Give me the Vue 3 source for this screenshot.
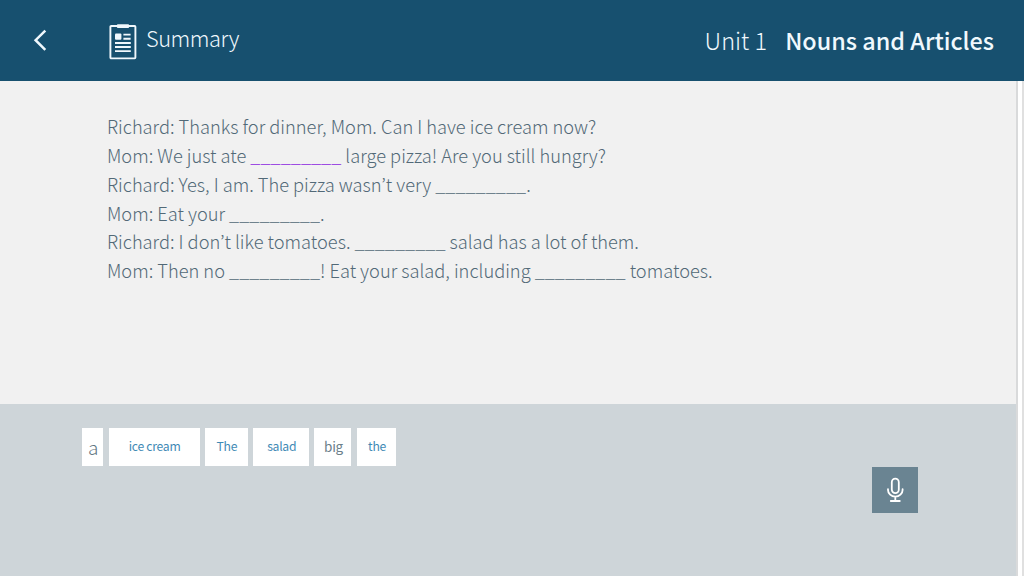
<template>
  <div class="lesson">
    <header class="top-bar">
      <button class="back-button" aria-label="Back">
        <svg width="14" height="24" viewBox="0 0 14 24">
          <path d="M12.3 1.7 2.6 11.2l9.7 9.6" fill="none" stroke="currentColor" stroke-width="2.5" />
        </svg>
      </button>
      <svg class="summary-icon" width="28" height="36" viewBox="0 0 28 36">
        <rect x="1.4" y="2" width="25" height="32.4" rx="0.8" fill="none" stroke="currentColor" stroke-width="1.9" />
        <rect x="7.8" y="0.3" width="12.4" height="3.6" rx="1.2" fill="currentColor" />
        <rect x="6" y="9.4" width="6.4" height="6.4" rx="1" fill="currentColor" />
        <path d="M14.4 10.6h7.2M14.4 14.8h7.2M6 19h15.8M6 23h15.8M6 27.1h15.8" stroke="currentColor" stroke-width="1.9" />
      </svg>
      <span class="section-name">Summary</span>
      <div class="unit-info">
        <span class="unit-number">Unit 1</span>
        <span class="unit-title">Nouns and Articles</span>
      </div>
    </header>

    <div class="page-body">
      <div class="panels">
        <main class="dialogue">
          <p v-for="(line, index) in lines" :key="index" class="dialogue-line">
            <template v-for="(part, i) in line" :key="i">
              <span v-if="part === null" class="blank" :class="{ active: index === 1 }">_________</span>
              <span v-else>{{ part }}</span>
            </template>
          </p>
        </main>

        <section class="word-bank">
          <div class="words">
            <button v-for="word in words" :key="word.text" class="word" :class="word.style">{{ word.text }}</button>
          </div>
          <button class="mic-button" aria-label="Record">
            <svg width="18" height="26" viewBox="0 0 18 26">
              <g fill="none" stroke="currentColor" stroke-width="1.8" stroke-linecap="round">
                <rect x="5.8" y="1.7" width="7" height="14.4" rx="3.5" />
                <path d="M2 12.2v.8a7.3 6.6 0 0 0 14.6 0v-.8M9.3 19.8v4M4.8 24h9" />
              </g>
            </svg>
          </button>
        </section>
      </div>
      <div class="scroll-track"></div>
    </div>
  </div>
</template>

<script setup>
// null marks a gap that the learner fills in
const lines = [
  ['Richard: Thanks for dinner, Mom. Can I have ice cream now?'],
  ['Mom: We just ate ', null, ' large pizza! Are you still hungry?'],
  ['Richard: Yes, I am. The pizza wasn’t very ', null, '.'],
  ['Mom: Eat your ', null, '.'],
  ['Richard: I don’t like tomatoes. ', null, ' salad has a lot of them.'],
  ['Mom: Then no ', null, '! Eat your salad, including ', null, ' tomatoes.']
]

const words = [
  { text: 'a', style: 'word-a' },
  { text: 'ice cream', style: 'word-ice' },
  { text: 'The', style: 'word-article-upper' },
  { text: 'salad', style: 'word-salad' },
  { text: 'big', style: 'word-big' },
  { text: 'the', style: 'word-article' }
]
</script>

<style>
body {
  margin: 0;
}
</style>

<style scoped>
.lesson {
  width: 1024px;
  height: 576px;
  display: flex;
  flex-direction: column;
  overflow: hidden;
  background: #fff;
  font-family: "Noto Sans CJK JP", "Open Sans", sans-serif;
  font-weight: 300;
}

button {
  font: inherit;
  border: 0;
  padding: 0;
}

.top-bar {
  height: 81px;
  flex: none;
  display: flex;
  align-items: center;
  box-sizing: border-box;
  padding: 0 30px 0 33px;
  background: #17506f;
  color: #f0f8fd;
}

.back-button {
  display: flex;
  margin-right: 62px;
  background: none;
  color: inherit;
}

.summary-icon {
  margin-top: 3px;
}

.section-name {
  margin: -5px 0 0 9px;
  font-size: 21.8px;
  line-height: 32px;
  letter-spacing: -0.45px;
}

.unit-info {
  display: flex;
  gap: 18px;
  margin: -2px 0 0 auto;
  font-size: 23.5px;
  line-height: 36px;
  white-space: nowrap;
}

.unit-title {
  font-size: 23.4px;
  font-weight: 500;
}

.page-body {
  flex: 1;
  display: flex;
}

.panels {
  width: 1016px;
  display: flex;
  flex-direction: column;
}

.dialogue {
  height: 323px;
  box-sizing: border-box;
  padding: 31.4px 0 0 107px;
  background: #f1f1f1;
  color: #526977;
}

.dialogue-line {
  margin: 0;
  font-size: 18.25px;
  line-height: 28.7px;
  white-space: pre;
}

.blank.active {
  color: #8a1fe0;
}

.word-bank {
  flex: 1;
  display: flex;
  justify-content: space-between;
  align-items: flex-start;
  padding: 24px 98px 0 82px;
  background: #ced5d9;
}

.words {
  display: flex;
  gap: 5.3px;
}

.word {
  height: 37.5px;
  padding: 0 0 1px 1px;
  background: #fff;
  color: #3f8ab5;
  font-size: 12.2px;
  font-weight: 400;
  letter-spacing: -0.3px;
  white-space: nowrap;
}

.word-a {
  width: 21.3px;
  color: #627783;
  font-size: 19px;
  font-weight: 300;
}

.word-ice {
  width: 91px;
}

.word-article-upper {
  width: 43px;
}

.word-salad {
  width: 56px;
}

.word-big {
  width: 37px;
  color: #6b7f8a;
  font-size: 13.5px;
}

.word-article {
  width: 39.5px;
}

.mic-button {
  width: 46px;
  height: 46px;
  margin-top: 39px;
  display: flex;
  align-items: center;
  justify-content: center;
  background: #6a8492;
  color: #fff;
}

.scroll-track {
  flex: 1;
  border-left: 2px solid #d9dadb;
  border-right: 2px solid #e0e0e0;
  background: #fff;
}
</style>
